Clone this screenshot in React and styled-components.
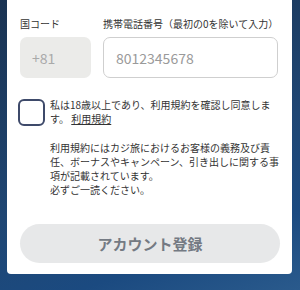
import React from "react";
import styled, { createGlobalStyle } from "styled-components";

const Global = createGlobalStyle`
  html, body { margin: 0; padding: 0; }
  body {
    width: 300px;
    height: 290px;
    overflow: hidden;
    font-family: "Noto Sans CJK JP", "Noto Sans", sans-serif;
    background: linear-gradient(160deg, #1a3352 0%, #1f4673 55%, #1b4a80 80%, #2a5a8c 100%);
  }
`;

const Card = styled.div`
  margin: 0 8px 0 7px;
  background: #ffffff;
  border-radius: 0 0 4px 4px;
  padding: 17px 13px 11px 13px;
  display: flex;
  flex-direction: column;
`;

const FieldRow = styled.div`
  display: flex;
  gap: 12px;
`;

const Field = styled.div`
  display: flex;
  flex-direction: column;
  gap: 6px;
  width: ${(p) => p.$w || "auto"};
  flex: ${(p) => (p.$grow ? 1 : "none")};
  margin-right: ${(p) => p.$mr || "0"};
`;

const Label = styled.div`
  font-size: 10px;
  line-height: 14px;
  color: #333;
  white-space: nowrap;
`;

const Input = styled.div`
  height: 41px;
  box-sizing: border-box;
  border-radius: 7px;
  display: flex;
  align-items: center;
  padding-left: 12px;
  font-size: 14px;
  color: ${(p) => (p.$disabled ? "#a9a9a9" : "#9a9a9a")};
  background: ${(p) => (p.$disabled ? "#ebebe9" : "#ffffff")};
  border: ${(p) => (p.$disabled ? "none" : "1px solid #cfcfcf")};
`;

const AgreeRow = styled.div`
  display: flex;
  align-items: flex-start;
  gap: 5px;
  margin-top: 20px;
  margin-left: -2px;
`;

const Checkbox = styled.div`
  width: 27px;
  height: 27px;
  box-sizing: border-box;
  border: 2px solid #3e4a6a;
  border-radius: 6px;
  flex: none;
  margin-top: 1px;
`;

const Text = styled.p`
  margin: 0;
  font-size: 10px;
  line-height: 14px;
  color: #333;
  padding-left: ${(p) => p.$indent || "0"};
  margin-top: ${(p) => p.$mt || "0"};
`;

const Link = styled.span`
  text-decoration: underline;
`;

const Button = styled.div`
  margin-top: 27px;
  height: 39px;
  border-radius: 20px;
  background: #e7e8e9;
  color: #747a83;
  font-size: 15px;
  font-weight: 700;
  display: flex;
  align-items: center;
  justify-content: center;
  margin-right: -1px;
`;

export default function App() {
  return (
    <>
      <Global />
      <Card>
        <FieldRow>
          <Field $w="71px">
            <Label>国コード</Label>
            <Input $disabled>+81</Input>
          </Field>
          <Field $grow $mr="1px">
            <Label>携帯電話番号（最初の0を除いて入力）</Label>
            <Input>8012345678</Input>
          </Field>
        </FieldRow>
        <AgreeRow>
          <Checkbox />
          <Text>
            私は18歳以上であり、利用規約を確認し同意します。 <Link>利用規約</Link>
          </Text>
        </AgreeRow>
        <Text $indent="30px" $mt="15px">
          利用規約にはカジ旅におけるお客様の義務及び責任、ボーナスやキャンペーン、引き出しに関する事項が記載されています。
          <br />
          必ずご一読ください。
        </Text>
        <Button>アカウント登録</Button>
      </Card>
    </>
  );
}
